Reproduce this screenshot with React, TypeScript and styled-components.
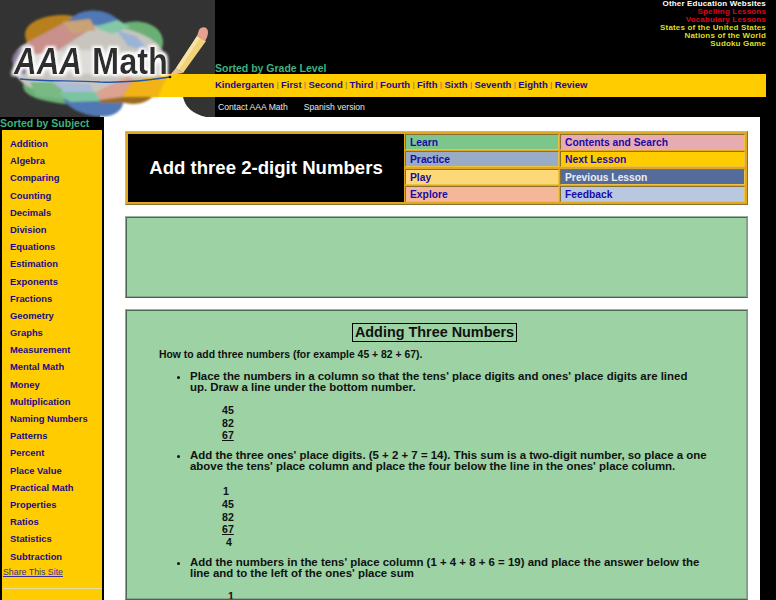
import React from 'react'
import styled, { createGlobalStyle } from 'styled-components'

const GlobalStyle = createGlobalStyle`
  html, body {
    margin: 0;
    height: 600px;
    overflow: hidden;
    background: #000;
    font-family: "Liberation Sans", Arial, sans-serif;
  }
`

const Page = styled.div`
  width: 776px;
  height: 600px;
  overflow: hidden;
`
const Header = styled.header`
  display: flex;
  height: 117px;
`
const LogoBox = styled.div`
  width: 215px;
  height: 117px;
  flex: none;
`
const HeaderRight = styled.div`
  flex: 1;
  display: flex;
  flex-direction: column;
  padding-right: 10px;
`
const TopLinks = styled.div`
  height: 62px;
  text-align: right;
`
const TopLink = styled.a<{ $color: string }>`
  display: block;
  font-size: 8px;
  line-height: 8px;
  letter-spacing: 0.17px;
  font-weight: bold;
  color: ${(p) => p.$color};
`
const SortedLabel = styled.div`
  height: 12px;
  font-size: 10.5px;
  line-height: 12px;
  font-weight: bold;
  color: #3fb27f;
`
const GradeBar = styled.nav`
  display: flex;
  align-items: center;
  height: 21px;
  padding-bottom: 2px;
  background: #ffcc00;
  font-size: 9.5px;
  font-weight: bold;
  color: #1a0a8c;
`
const Sep = styled.span`
  margin: 0 2.5px;
  font-weight: normal;
  font-size: 7px;
  color: #5a5060;
`
const ContactRow = styled.div`
  display: flex;
  gap: 16px;
  height: 20px;
  align-items: center;
  padding-left: 3px;
  font-size: 8.6px;
  color: #e8e8e8;
`
const Body = styled.div`
  display: flex;
  height: 483px;
`
const Sidebar = styled.aside`
  width: 104px;
  flex: none;
`
const SubjectLabel = styled(SortedLabel)`
  height: 13px;
  line-height: 13px;
`
const SideBox = styled.div`
  margin: 0 2px;
  height: 470px;
  background: #ffcc00;
  padding-top: 5px;
  box-sizing: border-box;
`
const SideLink = styled.a`
  display: block;
  height: 17.2px;
  line-height: 17.2px;
  padding-left: 8px;
  font-size: 9.4px;
  font-weight: bold;
  color: #1a0a8c;
`
const Share = styled.a`
  display: block;
  margin: 1px 0 0 1px;
  font-size: 8.8px;
  line-height: 12px;
  color: #3a2a9c;
  text-decoration: underline;
`
const SideRule = styled.div`
  margin: 10px 0 0 1px;
  height: 1px;
  background: #e6dca8;
`
const Main = styled.main`
  width: 656px;
  flex: none;
  background: #fff;
  padding: 14px 12px 0 21px;
  box-sizing: border-box;
`
const NavTable = styled.div`
  display: grid;
  grid-template-columns: 276px 154px 185px;
  grid-template-rows: repeat(4, 16px);
  gap: 1.3px 1px;
  width: 623px;
  height: 74px;
  box-sizing: border-box;
  padding: 2px;
  background: #e0a820;
  border: 1px solid;
  border-color: #f0b818 #8a7030 #8a7030 #f0b818;
`
const TitleCell = styled.h1`
  grid-row: 1 / span 4;
  margin: 0;
  display: flex;
  align-items: center;
  justify-content: center;
  background: #000;
  color: #fff;
  font-size: 18.6px;
  font-weight: bold;
`
const NavCell = styled.a<{ $bg: string; $light?: boolean }>`
  display: flex;
  align-items: center;
  padding: 1px 0 0 4px;
  box-sizing: border-box;
  background: ${(p) => p.$bg};
  border: 1px solid #8a7030;
  border-right-color: #f0c040;
  border-bottom-color: #f0c040;
  font-size: 10.3px;
  font-weight: bold;
  color: ${(p) => (p.$light ? '#eeeeee' : '#1a0aa8')};
`
const GreenPanel = styled.div`
  width: 623px;
  box-sizing: border-box;
  background: #9cd2a4;
  border: 1px solid;
  border-color: #9db3a2 #7f9a86 #4f5f52 #8aa890;
  box-shadow: inset 1px 1px 0 #4a6a52, inset -1px -1px 0 #86a88e;
`
const Banner = styled(GreenPanel)`
  margin-top: 11px;
  height: 82px;
`
const Lesson = styled(GreenPanel)`
  margin-top: 11px;
  height: 291px;
  overflow: hidden;
  padding: 13px 0 0 33px;
  color: #111;
`
const HeadingWrap = styled.div`
  display: flex;
  justify-content: center;
  padding-right: 37px;
`
const Heading = styled.h2`
  margin: 0;
  padding: 0 2px;
  border: 1px solid #000;
  font-size: 14.4px;
  line-height: 17px;
  font-weight: bold;
`
const Intro = styled.p`
  margin: 6px 0 0;
  font-size: 10.4px;
  line-height: 13px;
  font-weight: bold;
`
const Steps = styled.ul`
  margin: 0;
  padding: 0 0 0 31px;
  width: 518px;
`
const Step = styled.li<{ $top: number }>`
  margin-top: ${(p) => p.$top}px;
  font-size: 11.45px;
  line-height: 11px;
  font-weight: bold;
`
const Sum = styled.div<{ $top: number; $pad: number }>`
  margin-top: ${(p) => p.$top}px;
  padding-left: ${(p) => p.$pad}px;
  font-size: 10.6px;
  line-height: 12.7px;
  font-weight: bold;
`
const SumLine = styled.div<{ $indent?: boolean; $under?: boolean }>`
  padding-left: ${(p) => (p.$indent ? 1 : 0)}px;
  text-decoration: ${(p) => (p.$under ? 'underline' : 'none')};
`

const Logo: React.FC = () => (
  <svg width="215" height="117" viewBox="0 0 215 117">
    <defs>
      <filter id="soft" x="-5%" y="-5%" width="110%" height="110%">
        <feGaussianBlur stdDeviation="1.6" />
      </filter>
      <filter id="edge" x="-5%" y="-5%" width="110%" height="110%">
        <feGaussianBlur stdDeviation="0.8" />
      </filter>
      <filter id="halo" x="-10%" y="-30%" width="120%" height="160%">
        <feMorphology in="SourceAlpha" operator="dilate" radius="2" />
        <feGaussianBlur stdDeviation="1.6" />
        <feComponentTransfer>
          <feFuncR type="linear" slope="0" intercept="1" />
          <feFuncG type="linear" slope="0" intercept="1" />
          <feFuncB type="linear" slope="0" intercept="1" />
        </feComponentTransfer>
        <feMerge>
          <feMergeNode />
          <feMergeNode in="SourceGraphic" />
        </feMerge>
      </filter>
    </defs>
    <rect width="215" height="117" fill="#333" />
    <path d="M100 117 L100 97 L183 97 C185 107 193 114 206 117 Z" fill="#fff" />
    <g filter="url(#edge)">
      <path d="M24 82 C20 92 30 100 65 104 L100 100 L70 80 Z" fill="#6ab074" />
      <path d="M63 100 C72 112 95 120 112 115 C120 112 124 106 123 100 L90 90 Z" fill="#4f78b4" />
      <path d="M98 103 L125 103 C135 105 145 104 152 97 L160 78 L120 80 Z" fill="#9a6c22" />
      <path d="M25 36 C24 22 44 15 64 15 C76 15 86 20 94 26 L50 56 L27 44 Z" fill="#b8801f" />
      <path d="M68 22 C78 7 104 8 116 18 L128 27 L92 34 Z" fill="#4f78b4" />
      <path d="M122 24 C142 17 164 26 163 44 L160 56 L136 42 Z" fill="#6ab074" />
      <path d="M14 60 C14 48 24 44 34 40 C60 24 100 22 130 30 C150 36 165 46 166 62 C168 76 160 90 130 94 C90 104 30 96 18 78 C14 72 13 66 14 60 Z" fill="#c8c5bf" />
      <path d="M28 42 L62 24 L94 27 L52 54 L36 56 Z" fill="#c9908c" />
      <path d="M62 22 L90 19 L96 30 L72 34 Z" fill="#c9a276" />
      <path d="M94 27 L118 20 L130 27 L112 34 Z" fill="#84c8a4" />
      <path d="M116 30 L136 36 L150 52 L128 46 Z" fill="#9ab4d4" />
      <path d="M12 60 C13 52 20 47 28 46 L26 74 L16 74 Z" fill="#8a7a9a" />
      <path d="M30 82 L56 82 L70 100 L36 96 Z" fill="#7ab884" />
      <path d="M52 82 L90 84 L96 98 L68 94 Z" fill="#a9bcd8" />
      <path d="M58 92 L96 92 L100 101 L70 102 Z" fill="#7cc4a0" />
      <path d="M96 92 L128 76 L140 84 L122 97 L100 100 Z" fill="#dba390" />
    </g>
    <path d="M160 74 L215 74 L215 97 L150 97 L160 84 Z" fill="#ffcc00" />
    <path d="M122 97 L134 80 L160 76 L168 74 L158 97 Z" fill="#f2b318" filter="url(#edge)" />
    <ellipse cx="90" cy="62" rx="70" ry="12" fill="#dedcd8" filter="url(#soft)" />
    <g filter="url(#halo)" fill="#2e2e2e" fontFamily='"Liberation Sans", Arial, sans-serif' fontWeight="bold" fontSize="37">
      <text x="14" y="74" fontStyle="italic" textLength="68" lengthAdjust="spacingAndGlyphs">AAA</text>
      <text x="92" y="74" textLength="76" lengthAdjust="spacingAndGlyphs">Math</text>
    </g>
    <path d="M20 79 C50 82 70 80 100 82 C125 83 150 80 170 77" fill="none" stroke="#2456a8" strokeWidth="1.4" />
    <circle cx="170" cy="77" r="1.3" fill="#111" />
    <path d="M170 75 L176 68 L183 73 Z" fill="#e9c3a0" />
    <path d="M176 68 L197 36 L206 41 L183 73 Z" fill="#f1d27a" />
    <path d="M176 68 L197 36 L200 38 L179 70 Z" fill="#f7e3a4" />
    <path d="M197 36 L199 30 C201 26 208 26 208 32 C208 35 207 38 205 41 Z" fill="#e8a090" />
  </svg>
)

const topLinks: [string, string][] = [
  ['Other Education Websites', '#ffffff'],
  ['Spelling Lessons', '#e0001c'],
  ['Vocabulary Lessons', '#e0001c'],
  ['States of the United States', '#dddd22'],
  ['Nations of the World', '#dddd22'],
  ['Sudoku Game', '#dddd22'],
]
const grades = ['Kindergarten', 'First', 'Second', 'Third', 'Fourth', 'Fifth', 'Sixth', 'Seventh', 'Eighth', 'Review']
const subjects = [
  'Addition', 'Algebra', 'Comparing', 'Counting', 'Decimals', 'Division', 'Equations', 'Estimation',
  'Exponents', 'Fractions', 'Geometry', 'Graphs', 'Measurement', 'Mental Math', 'Money', 'Multiplication',
  'Naming Numbers', 'Patterns', 'Percent', 'Place Value', 'Practical Math', 'Properties', 'Ratios',
  'Statistics', 'Subtraction',
]

const App: React.FC = () => (
  <Page>
    <GlobalStyle />
    <Header>
      <LogoBox>
        <Logo />
      </LogoBox>
      <HeaderRight>
        <TopLinks>
          {topLinks.map(([label, color]) => (
            <TopLink key={label} $color={color}>{label}</TopLink>
          ))}
        </TopLinks>
        <SortedLabel>Sorted by Grade Level</SortedLabel>
        <GradeBar>
          {grades.map((g, i) => (
            <React.Fragment key={g}>
              {i > 0 && <Sep>|</Sep>}
              {g}
            </React.Fragment>
          ))}
        </GradeBar>
        <ContactRow>
          <span>Contact AAA Math</span>
          <span>Spanish version</span>
        </ContactRow>
      </HeaderRight>
    </Header>
    <Body>
      <Sidebar>
        <SubjectLabel>Sorted by Subject</SubjectLabel>
        <SideBox>
          {subjects.map((s) => (
            <SideLink key={s}>{s}</SideLink>
          ))}
          <Share>Share This Site</Share>
          <SideRule />
        </SideBox>
      </Sidebar>
      <Main>
        <NavTable>
          <TitleCell>Add three 2-digit Numbers</TitleCell>
          <NavCell $bg="#7cc68c">Learn</NavCell>
          <NavCell $bg="#e8acb0">Contents and Search</NavCell>
          <NavCell $bg="#98acc8">Practice</NavCell>
          <NavCell $bg="#ffcc00">Next Lesson</NavCell>
          <NavCell $bg="#fcd878">Play</NavCell>
          <NavCell $bg="#546c9c" $light>Previous Lesson</NavCell>
          <NavCell $bg="#f4b898">Explore</NavCell>
          <NavCell $bg="#b8c8e0">Feedback</NavCell>
        </NavTable>
        <Banner />
        <Lesson>
          <HeadingWrap>
            <Heading>Adding Three Numbers</Heading>
          </HeadingWrap>
          <Intro>How to add three numbers (for example 45 + 82 + 67).</Intro>
          <Steps>
            <Step $top={10}>
              Place the numbers in a column so that the tens' place digits and ones' place digits are lined<br />
              up. Draw a line under the bottom number.
              <Sum $top={11} $pad={32}>
                <SumLine>45</SumLine>
                <SumLine>82</SumLine>
                <SumLine $under>67</SumLine>
              </Sum>
            </Step>
            <Step $top={8}>
              Add the three ones' place digits. (5 + 2 + 7 = 14). This sum is a two-digit number, so place a one<br />
              above the tens' place column and place the four below the line in the ones' place column.
              <Sum $top={13} $pad={32}>
                <SumLine $indent>1</SumLine>
                <SumLine>45</SumLine>
                <SumLine>82</SumLine>
                <SumLine $under>67</SumLine>
                <SumLine $indent>&nbsp;4</SumLine>
              </Sum>
            </Step>
            <Step $top={8}>
              Add the numbers in the tens' place column (1 + 4 + 8 + 6 = 19) and place the answer below the<br />
              line and to the left of the ones' place sum
              <Sum $top={11} $pad={38}>
                <SumLine>1</SumLine>
              </Sum>
            </Step>
          </Steps>
        </Lesson>
      </Main>
    </Body>
  </Page>
)

export default App
